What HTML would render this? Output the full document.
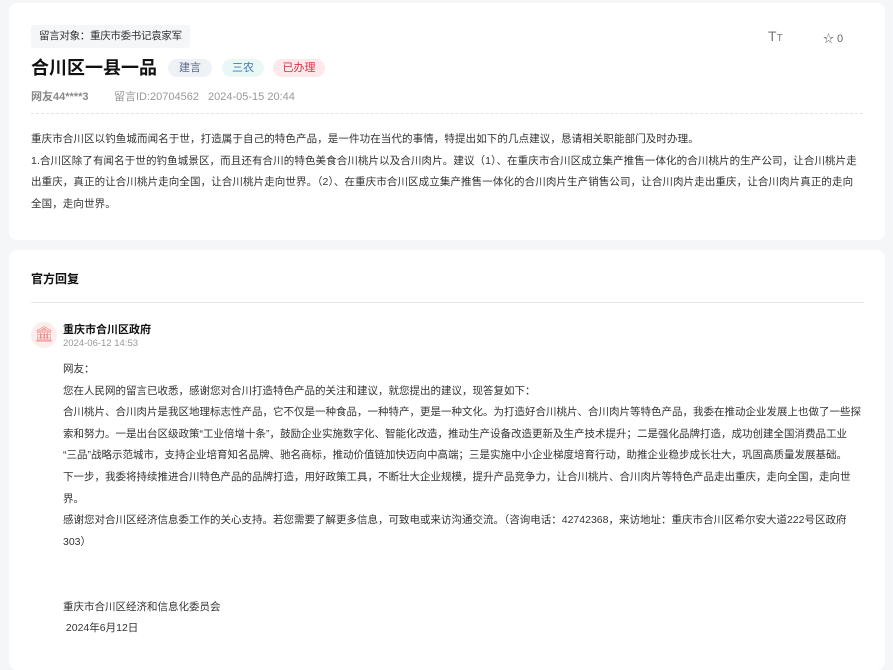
<!DOCTYPE html>
<html><head><meta charset="utf-8"><style>
*{margin:0;padding:0;box-sizing:border-box}
body{width:893px;height:641px;overflow:hidden;background:#f5f6f8;font-family:"Liberation Sans","Noto Sans CJK SC",sans-serif;color:#333;position:relative}
.card{position:absolute;left:9px;width:876px;background:#fff;border-radius:8px}
.c1{top:3px;height:237px}
.c2{top:250px;height:420px}
.obj{position:absolute;left:22px;top:22px;height:23px;padding:0 8px;background:#f5f6f8;border-radius:3px;font-size:10.5px;line-height:23px;color:#333;letter-spacing:-0.3px}
.title{position:absolute;left:22px;top:52px;font-size:18px;font-weight:bold;color:#111;line-height:26px}
.tag{position:absolute;top:56px;height:18px;line-height:18px;font-size:11px;border-radius:9px;text-align:center}
.meta{position:absolute;top:86px;font-size:11px;color:#999;line-height:16px}
.dash{position:absolute;left:22px;right:22px;top:110px;border-top:1px dashed #e3e3e3}
.body{position:absolute;left:22px;top:126px;font-size:10.5px;line-height:21.5px;color:#333;white-space:nowrap;letter-spacing:0.1px}
.h{position:absolute;left:31px;top:270px;font-size:12px;font-weight:bold;color:#111}
.line{position:absolute;left:31px;right:29px;top:302px;border-top:1px solid #e6e6e6}
.rep{position:absolute;left:63px;top:359px;font-size:10.5px;line-height:21.6px;color:#333;white-space:nowrap;letter-spacing:0}
</style></head><body>
<div class="card c1">
<div class="obj">留言对象：重庆市委书记袁家军</div>
<div class="title">合川区一县一品</div>
<div class="tag" style="left:159px;width:44px;background:#eef2f7;color:#5a6b84">建言</div>
<div class="tag" style="left:213px;width:42px;background:#eaf8f5;color:#3a78c9">三农</div>
<div class="tag" style="left:264px;width:52px;background:#fde8ec;color:#e0303e">已办理</div>
<div class="meta" style="left:22px;font-weight:bold;color:#888">网友44****3</div>
<div class="meta" style="left:105px">留言ID:20704562</div>
<div class="meta" style="left:199px">2024-05-15 20:44</div>
<div style="position:absolute;left:759px;top:25px;font-size:14px;color:#777">T<span style="font-size:10px">T</span></div>
<div style="position:absolute;left:814px;top:27px;font-size:11px;color:#666">☆ 0</div>
<div class="dash"></div>
<div class="body">重庆市合川区以钓鱼城而闻名于世，打造属于自己的特色产品，是一件功在当代的事情，特提出如下的几点建议，恳请相关职能部门及时办理。<br>1.合川区除了有闻名于世的钓鱼城景区，而且还有合川的特色美食合川桃片以及合川肉片。建议（1）、在重庆市合川区成立集产推售一体化的合川桃片的生产公司，让合川桃片走<br>出重庆，真正的让合川桃片走向全国，让合川桃片走向世界。（2）、在重庆市合川区成立集产推售一体化的合川肉片生产销售公司，让合川肉片走出重庆，让合川肉片真正的走向<br>全国，走向世界。</div>
</div>
<div class="card c2"></div>
<div class="h">官方回复</div>
<div class="line"></div>
<div style="position:absolute;left:31px;top:322px;width:26px;height:26px;border-radius:50%;background:#fdeeee;color:#e88;font-size:15px;text-align:center;line-height:26px">🏛</div>
<div style="position:absolute;left:63px;top:321px;font-size:11px;font-weight:bold;color:#111">重庆市合川区政府</div>
<div style="position:absolute;left:63px;top:338px;font-size:9.5px;color:#999">2024-06-12 14:53</div>
<div class="rep">网友：<br>您在人民网的留言已收悉，感谢您对合川打造特色产品的关注和建议，就您提出的建议，现答复如下：<br>合川桃片、合川肉片是我区地理标志性产品，它不仅是一种食品，一种特产，更是一种文化。为打造好合川桃片、合川肉片等特色产品，我委在推动企业发展上也做了一些探<br>索和努力。一是出台区级政策“工业倍增十条”，鼓励企业实施数字化、智能化改造，推动生产设备改造更新及生产技术提升；二是强化品牌打造，成功创建全国消费品工业<br>“三品”战略示范城市，支持企业培育知名品牌、驰名商标，推动价值链加快迈向中高端；三是实施中小企业梯度培育行动，助推企业稳步成长壮大，巩固高质量发展基础。<br>下一步，我委将持续推进合川特色产品的品牌打造，用好政策工具，不断壮大企业规模，提升产品竞争力，让合川桃片、合川肉片等特色产品走出重庆，走向全国，走向世<br>界。<br>感谢您对合川区经济信息委工作的关心支持。若您需要了解更多信息，可致电或来访沟通交流。（咨询电话：42742368，来访地址：重庆市合川区希尔安大道222号区政府<br>303）<br><br><br>重庆市合川区经济和信息化委员会<br>&nbsp;2024年6月12日</div>
</body></html>
